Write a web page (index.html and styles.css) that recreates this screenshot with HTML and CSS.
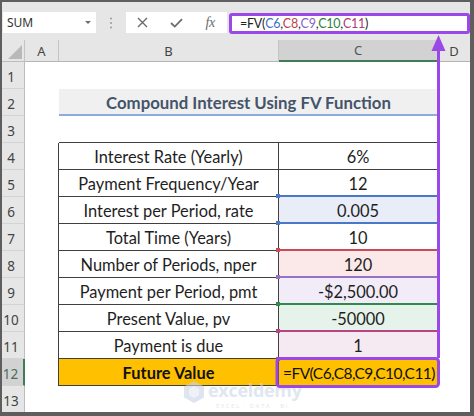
FILE: index.html
```html
<!DOCTYPE html>
<html>
<head>
<meta charset="utf-8">
<link rel="stylesheet" href="styles.css">
</head>
<body>
<div class="window">
  <div class="toolbar">
    <div class="namebox"><span>SUM</span><span class="caret"></span></div>
    <div class="grip">
      <svg width="4" height="12" viewBox="0 0 4 12"><circle cx="2" cy="1.5" r="1" fill="#9a9a9a"/><circle cx="2" cy="6" r="1" fill="#9a9a9a"/><circle cx="2" cy="10.5" r="1" fill="#9a9a9a"/></svg>
    </div>
    <div class="fxbtns">
      <span class="btn"><svg width="11" height="11" viewBox="0 0 11 11"><path d="M1 1 L10 10 M10 1 L1 10" stroke="#6b6b6b" stroke-width="1.4" fill="none"/></svg></span>
      <span class="btn"><svg width="13" height="10" viewBox="0 0 13 10"><path d="M1 5 L4.8 8.6 L12 1.2" stroke="#6b6b6b" stroke-width="1.8" fill="none"/></svg></span>
      <span class="btn fx">fx</span>
    </div>
    <div class="formula">=FV(<span class="k1">C6</span>,<span class="k2">C8</span>,<span class="k3">C9</span>,<span class="k4">C10</span>,<span class="k5">C11</span>)</div>
  </div>

  <div class="sheet">
    <div class="corner"><span class="tri"></span></div>
    <div class="ch">A</div>
    <div class="ch">B</div>
    <div class="ch sel">C</div>
    <div class="ch last">D</div>

    <div class="rh">1</div><div class="c"></div><div class="c"></div><div class="c"></div><div class="c"></div>

    <div class="rh">2</div><div class="c"></div><div class="c title">Compound Interest Using FV Function</div><div class="c"></div>

    <div class="rh">3</div><div class="c"></div><div class="c tb"></div><div class="c tb"></div><div class="c"></div>

    <div class="rh">4</div><div class="c ta"></div><div class="c t">Interest Rate (Yearly)</div><div class="c t">6%</div><div class="c"></div>
    <div class="rh">5</div><div class="c ta"></div><div class="c t">Payment Frequency/Year</div><div class="c t bb-blue">12</div><div class="c"></div>
    <div class="rh">6</div><div class="c ta"></div><div class="c t">Interest per Period, rate</div><div class="c t v h-blue bb-blue">0.005</div><div class="c"></div>
    <div class="rh">7</div><div class="c ta"></div><div class="c t">Total Time (Years)</div><div class="c t bb-red">10</div><div class="c"></div>
    <div class="rh">8</div><div class="c ta"></div><div class="c t">Number of Periods, nper</div><div class="c t v h-red bb-purple">120</div><div class="c"></div>
    <div class="rh">9</div><div class="c ta"></div><div class="c t">Payment per Period, pmt</div><div class="c t v h-purple bb-green">-$2,500.00</div><div class="c"></div>
    <div class="rh">10</div><div class="c ta"></div><div class="c t">Present Value, pv</div><div class="c t v h-green bb-pink">-50000</div><div class="c"></div>
    <div class="rh">11</div><div class="c ta"></div><div class="c t">Payment is due</div><div class="c t v h-pink">1</div><div class="c"></div>
    <div class="rh sel">12</div><div class="c ta"></div><div class="c t gold strong">Future Value</div><div class="c t gold fvcell">=FV(C6,C8,C9,C10,C11)</div><div class="c"></div>
    <div class="rh">13</div><div class="c"></div><div class="c"></div><div class="c"></div><div class="c"></div>
  </div>

  <div class="watermark">
    <svg width="22" height="24" viewBox="0 0 22 24"><path d="M11 1 L21 6.5 L21 17.5 L11 23 L1 17.5 L1 6.5 Z" fill="#c9d5e8"/><path d="M6 9 L11 6 L16 9 L16 15 L11 18 L6 15 Z" fill="#e4ebf5"/></svg>
    <div class="wm-text">
      <span class="wm-big">exceldemy</span>
      <span class="wm-small">EXCEL · DATA · BI</span>
    </div>
  </div>

  <svg class="overlay" width="474" height="416" viewBox="0 0 474 416">
    <rect x="277" y="358.5" width="161.5" height="28" rx="3" ry="3" fill="none" stroke="#9b48e8" stroke-width="3"/>
    <line x1="438.5" y1="46" x2="438.5" y2="358" stroke="#9b48e8" stroke-width="3"/>
    <polygon points="438.5,35 431.5,51 445.5,51" fill="#9b48e8"/>
  </svg>
</div>
</body>
</html>
```

FILE: styles.css
```css
body {
  margin: 0;
}

.window {
  position: relative;
  width: 474px;
  height: 416px;
  box-sizing: border-box;
  border-style: solid;
  border-color: #5e5e5e;
  border-width: 2px 4px 4px 2px;
  background: #e6e6e6;
  overflow: hidden;
  font-family: Lato, "Liberation Sans", sans-serif;
}

/* ---------- toolbar ---------- */
.toolbar {
  height: 38px;
  box-sizing: border-box;
  padding-top: 10px;
  display: flex;
  align-items: flex-start;
}

.namebox {
  margin-left: 1px;
  width: 93px;
  height: 21px;
  box-sizing: border-box;
  background: #fff;
  display: flex;
  align-items: center;
  justify-content: space-between;
  padding: 0 5px 0 4px;
  font-family: "Noto Sans", sans-serif;
  font-size: 12px;
  color: #333;
}

.caret {
  width: 0;
  height: 0;
  border-left: 3px solid transparent;
  border-right: 3px solid transparent;
  border-top: 3px solid #6e6e6e;
}

.grip {
  width: 30px;
  height: 21px;
  display: flex;
  align-items: center;
  justify-content: center;
}

.fxbtns {
  width: 101px;
  height: 21px;
  background: #fff;
  display: grid;
  grid-template-columns: 1fr 1fr 1fr;
  align-items: center;
}

.btn {
  display: flex;
  justify-content: center;
  align-items: center;
}

.fx {
  font-family: "Liberation Serif", serif;
  font-style: italic;
  font-size: 14px;
  color: #6b6b6b;
  letter-spacing: -0.5px;
}

.formula {
  margin-left: 2px;
  margin-top: 1px;
  flex: 1;
  height: 21px;
  box-sizing: border-box;
  border: 3px solid #9b48e8;
  border-radius: 3px;
  background: #fff;
  padding-left: 8px;
  display: flex;
  align-items: center;
  font-size: 12.5px;
  letter-spacing: -0.25px;
  color: #222;
}

.k1 { color: #3f6fc2; }
.k2 { color: #c0404a; }
.k3 { color: #8a63c4; }
.k4 { color: #2f8046; }
.k5 { color: #b0387e; }

/* ---------- sheet ---------- */
.sheet {
  display: grid;
  grid-template-columns: 23px 34px 220px 159px 32px;
  grid-template-rows: 22px repeat(13, 27px);
}

.corner {
  background: #e6e6e6;
  border-right: 1px solid #c4c4c4;
  border-bottom: 1px solid #bdbdbd;
  box-sizing: border-box;
  position: relative;
}

.tri {
  position: absolute;
  right: 2px;
  bottom: 2px;
  width: 0;
  height: 0;
  border-left: 14px solid transparent;
  border-bottom: 14px solid #b9b9b9;
}

.ch {
  background: #e6e6e6;
  border-right: 1px solid #c4c4c4;
  border-bottom: 1px solid #b5b5b5;
  box-sizing: border-box;
  display: flex;
  align-items: center;
  justify-content: center;
  font-family: "Noto Sans", sans-serif;
  font-size: 13px;
  color: #444;
}

.ch.sel {
  background: #d2d2d2;
  border-bottom: 2px solid #3e7d57;
  color: #555;
}

.ch.last {
  border-right: none;
}

.rh {
  background: #e6e6e6;
  border-right: 1px solid #bdbdbd;
  border-bottom: 1px solid #d3d3d3;
  box-sizing: border-box;
  display: flex;
  align-items: center;
  justify-content: center;
  padding-right: 4px;
  padding-top: 4px;
  font-family: "Noto Sans", sans-serif;
  font-size: 13.5px;
  color: #444;
}

.rh.sel {
  background: #d2d2d2;
  border-right: 2px solid #3e7d57;
  color: #4f6b5a;
}

.c {
  background: #fff;
  box-sizing: border-box;
  display: flex;
  align-items: center;
  justify-content: center;
  font-size: 16.4px;
  color: #1e1e1e;
  padding-top: 1px;
  white-space: nowrap;
}

.title {
  grid-column: span 2;
  background: #f0f0f0;
  border-bottom: 2px solid #8faadc;
  font-weight: bold;
  font-size: 16.8px;
  color: #44546a;
}

.tb {
  border-bottom: 1px solid #404040;
}

.ta {
  border-right: 1px solid #404040;
}

.t {
  border-right: 1px solid #404040;
  border-bottom: 1px solid #404040;
}

.v {
  position: relative;
}

.bb-blue { border-bottom: 2px solid #4a78c8; }
.bb-red { border-bottom: 2px solid #cc4a55; }
.bb-purple { border-bottom: 2px solid #9472c8; }
.bb-green { border-bottom: 2px solid #2f8a4e; }
.bb-pink { border-bottom: 2px solid #b8457f; }

.h-blue { background: #e9edf8; }
.h-red { background: #fbe9ea; }
.h-purple { background: #f1ecf8; }
.h-green { background: #e6f3ea; }
.h-pink { background: #f6eaf2; }

.v::before,
.v::after {
  content: "";
  position: absolute;
  left: -3px;
  width: 4px;
  height: 4px;
}
.v::before { top: -3px; }
.v::after { bottom: -3px; }

.h-blue::before, .h-blue::after { background: #4a78c8; }
.h-red::before, .h-red::after { background: #cc4a55; }
.h-purple::before, .h-purple::after { background: #9472c8; }
.h-green::before, .h-green::after { background: #2f8a4e; }
.h-pink::before, .h-pink::after { background: #b8457f; }

.gold {
  background: #ffc000;
}

.strong {
  font-weight: bold;
  color: #111;
}

.fvcell {
  justify-content: flex-start;
  padding-left: 4px;
  font-size: 15.5px;
  letter-spacing: -0.55px;
  color: #111;
}

/* ---------- watermark & overlays ---------- */
.watermark {
  position: absolute;
  left: 181px;
  top: 378px;
  display: flex;
  align-items: flex-start;
  gap: 3px;
  opacity: 0.6;
}

.wm-text {
  display: flex;
  flex-direction: column;
  line-height: 1.1;
}

.wm-big {
  font-family: "Open Sans", sans-serif;
  font-weight: bold;
  font-size: 18px;
  line-height: 20px;
  color: #cdd8e8;
  letter-spacing: -0.3px;
}

.wm-small {
  font-family: "Open Sans", sans-serif;
  font-size: 6px;
  line-height: 7px;
  letter-spacing: 1.5px;
  color: #cdd8e8;
  padding-left: 8px;
  margin-top: 3px;
}

.overlay {
  position: absolute;
  left: -2px;
  top: -2px;
  pointer-events: none;
}
```
